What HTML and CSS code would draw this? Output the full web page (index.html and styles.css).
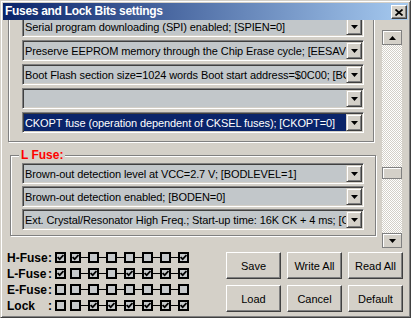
FILE: index.html
```html
<!DOCTYPE html>
<html lang="en">

<head>
    <meta charset="UTF-8">
    <title>Fuses and Lock Bits settings</title>
    <link rel="stylesheet" href="styles.css">
</head>

<body>
    <div class="window">

        <!-- Caption -->
        <div class="titlebar">
            <span class="title">Fuses and Lock Bits settings</span>
            <span class="close-btn">
                <svg width="8" height="7" viewBox="0 0 8 7"><path d="M0.5 0.5l7 6M7.5 0.5l-7 6" /></svg>
            </span>
        </div>

        <!-- Fuse combos -->
        <div class="scroll-row">
            <div class="scroll-view">
                <div class="group group-h">
                    <div class="combo"><span class="combo-text">Serial program downloading (SPI) enabled; [SPIEN=0]</span><span class="combo-btn"><svg width="7" height="4"><path d="M0 0h7l-3.5 4z" /></svg></span></div>
                    <div class="combo"><span class="combo-text">Preserve EEPROM memory through the Chip Erase cycle; [EESAVE=0]</span><span class="combo-btn"><svg width="7" height="4"><path d="M0 0h7l-3.5 4z" /></svg></span></div>
                    <div class="combo"><span class="combo-text">Boot Flash section size=1024 words Boot start address=$0C00; [BOOTSZ=01]</span><span class="combo-btn"><svg width="7" height="4"><path d="M0 0h7l-3.5 4z" /></svg></span></div>
                    <div class="combo"><span class="combo-text"></span><span class="combo-btn"><svg width="7" height="4"><path d="M0 0h7l-3.5 4z" /></svg></span></div>
                    <div class="combo selected"><span class="combo-text">CKOPT fuse (operation dependent of CKSEL fuses); [CKOPT=0]</span><span class="combo-btn"><svg width="7" height="4"><path d="M0 0h7l-3.5 4z" /></svg></span></div>
                </div>

                <div class="group group-l">
                    <span class="group-label">L Fuse:</span>
                    <div class="combo"><span class="combo-text">Brown-out detection level at VCC=2.7 V; [BODLEVEL=1]</span><span class="combo-btn"><svg width="7" height="4"><path d="M0 0h7l-3.5 4z" /></svg></span></div>
                    <div class="combo"><span class="combo-text">Brown-out detection enabled; [BODEN=0]</span><span class="combo-btn"><svg width="7" height="4"><path d="M0 0h7l-3.5 4z" /></svg></span></div>
                    <div class="combo"><span class="combo-text">Ext. Crystal/Resonator High Freq.; Start-up time: 16K CK + 4 ms; [CKSEL=1111 SUT=11]</span><span class="combo-btn"><svg width="7" height="4"><path d="M0 0h7l-3.5 4z" /></svg></span></div>
                </div>
            </div>

            <div class="scrollbar">
                <div class="sb-btn"><svg width="7" height="4"><path d="M0 4h7l-3.5-4z" /></svg></div>
                <div class="sb-track"><div class="sb-thumb"></div></div>
                <div class="sb-btn"><svg width="7" height="4"><path d="M0 0h7l-3.5 4z" /></svg></div>
            </div>
        </div>

        <!-- Bits + buttons -->
        <div class="bottom">
            <div class="fuse-grid">
                <div class="fuse-row">
                    <span class="fuse-name"><span>H-Fuse</span><span>:</span></span>
                    <span class="bit first"><svg viewBox="0 0 7 7"><path d="M0.6 3l2.1 2.2 3.8-4.2" /></svg></span>
                    <span class="bits">
                        <span class="bit"><svg viewBox="0 0 7 7"><path d="M0.6 3l2.1 2.2 3.8-4.2" /></svg></span>
                        <span class="bit"></span>
                        <span class="bit"></span>
                        <span class="bit"></span>
                        <span class="bit"></span>
                        <span class="bit"></span>
                        <span class="bit"><svg viewBox="0 0 7 7"><path d="M0.6 3l2.1 2.2 3.8-4.2" /></svg></span>
                    </span>
                </div>
                <div class="fuse-row">
                    <span class="fuse-name"><span>L-Fuse</span><span>:</span></span>
                    <span class="bit first"><svg viewBox="0 0 7 7"><path d="M0.6 3l2.1 2.2 3.8-4.2" /></svg></span>
                    <span class="bits">
                        <span class="bit"></span>
                        <span class="bit"><svg viewBox="0 0 7 7"><path d="M0.6 3l2.1 2.2 3.8-4.2" /></svg></span>
                        <span class="bit"></span>
                        <span class="bit"><svg viewBox="0 0 7 7"><path d="M0.6 3l2.1 2.2 3.8-4.2" /></svg></span>
                        <span class="bit"><svg viewBox="0 0 7 7"><path d="M0.6 3l2.1 2.2 3.8-4.2" /></svg></span>
                        <span class="bit"><svg viewBox="0 0 7 7"><path d="M0.6 3l2.1 2.2 3.8-4.2" /></svg></span>
                        <span class="bit"><svg viewBox="0 0 7 7"><path d="M0.6 3l2.1 2.2 3.8-4.2" /></svg></span>
                    </span>
                </div>
                <div class="fuse-row">
                    <span class="fuse-name"><span>E-Fuse</span><span>:</span></span>
                    <span class="bit first"></span>
                    <span class="bits">
                        <span class="bit"></span>
                        <span class="bit"></span>
                        <span class="bit"></span>
                        <span class="bit"></span>
                        <span class="bit"></span>
                        <span class="bit"></span>
                        <span class="bit"></span>
                    </span>
                </div>
                <div class="fuse-row">
                    <span class="fuse-name"><span>Lock</span><span>:</span></span>
                    <span class="bit first"></span>
                    <span class="bits">
                        <span class="bit"></span>
                        <span class="bit"><svg viewBox="0 0 7 7"><path d="M0.6 3l2.1 2.2 3.8-4.2" /></svg></span>
                        <span class="bit"><svg viewBox="0 0 7 7"><path d="M0.6 3l2.1 2.2 3.8-4.2" /></svg></span>
                        <span class="bit"><svg viewBox="0 0 7 7"><path d="M0.6 3l2.1 2.2 3.8-4.2" /></svg></span>
                        <span class="bit"><svg viewBox="0 0 7 7"><path d="M0.6 3l2.1 2.2 3.8-4.2" /></svg></span>
                        <span class="bit"><svg viewBox="0 0 7 7"><path d="M0.6 3l2.1 2.2 3.8-4.2" /></svg></span>
                        <span class="bit"><svg viewBox="0 0 7 7"><path d="M0.6 3l2.1 2.2 3.8-4.2" /></svg></span>
                    </span>
                </div>
            </div>

            <div class="buttons">
                <button class="btn">Save</button>
                <button class="btn">Write All</button>
                <button class="btn">Read All</button>
                <button class="btn">Load</button>
                <button class="btn">Cancel</button>
                <button class="btn">Default</button>
            </div>
        </div>

    </div>
</body>

</html>
```

FILE: styles.css
```css
body {
    margin: 0;
    font-family: "Liberation Sans", Arial, sans-serif;
    font-size: 11px;
    color: #000;
}

.window {
    width: 411px;
    height: 318px;
    box-sizing: border-box;
    background: #d4d0c8;
    border: 1px solid;
    border-color: #d4d0c8 #404040 #404040 #d4d0c8;
    box-shadow: inset 1px 1px #fff, inset -1px -1px #808080;
    padding: 2px;
    display: flex;
    flex-direction: column;
    overflow: hidden;
}

/* caption */
.titlebar {
    height: 17px;
    flex-shrink: 0;
    display: flex;
    justify-content: space-between;
    background: linear-gradient(to right, #0a246a, #a6caf0);
    padding-left: 2px;
}

.title {
    color: #fff;
    font-weight: bold;
    font-size: 12px;
    letter-spacing: -0.3px;
    line-height: 17px;
}

.close-btn {
    width: 16px;
    height: 14px;
    box-sizing: border-box;
    margin: 2px 1px 0 0;
    background: #d4d0c8;
    border: 1px solid;
    border-color: #fff #404040 #404040 #fff;
    box-shadow: inset -1px -1px #808080;
    display: flex;
    align-items: center;
    justify-content: center;
}

.close-btn svg path {
    stroke: #000;
    stroke-width: 1.7;
}

/* scrolling panel */
.scroll-row {
    height: 228px;
    flex-shrink: 0;
    display: flex;
}

.scroll-view {
    width: 379px;
    overflow: hidden;
}

.group {
    position: relative;
    width: 366px;
    box-sizing: border-box;
    border: 1px solid #808080;
    box-shadow: inset 1px 1px #fff, 1px 1px #fff;
    display: flex;
    flex-direction: column;
}

.group-h {
    margin: -14px 0 0 5px;
    padding: 9px 9px 8px 13px;
    gap: 3px;
}

.group-l {
    margin: 13px 0 0 7px;
    padding: 7px 11px 5px 11px;
    gap: 2px;
}

.group-label {
    position: absolute;
    top: -7px;
    left: 8px;
    padding: 0 2px;
    background: #d4d0c8;
    color: #ff0000;
    font-weight: bold;
    font-size: 12px;
    line-height: 13px;
}

.combo {
    height: 21px;
    box-sizing: border-box;
    display: flex;
    background: #c2c7ca;
    border: 1px solid;
    border-color: #808080 #fff #fff #808080;
    box-shadow: inset 1px 1px #404040, inset -1px -1px #d4d0c8;
    padding: 1px;
}

.combo-text {
    flex: 1;
    height: 17px;
    line-height: 19px;
    padding-left: 1px;
    overflow: hidden;
    white-space: nowrap;
    letter-spacing: -0.1px;
}

.combo.selected .combo-text {
    background: #0a246a;
    color: #fff;
}

.combo-btn {
    width: 16px;
    height: 17px;
    box-sizing: border-box;
    background: #d4d0c8;
    border: 1px solid;
    border-color: #d4d0c8 #404040 #404040 #d4d0c8;
    box-shadow: inset 1px 1px #fff, inset -1px -1px #808080;
    display: flex;
    align-items: center;
    justify-content: center;
}

/* scrollbar */
.scrollbar {
    width: 20px;
    height: 218px;
    margin: 10px 0 0 0;
    display: flex;
    flex-direction: column;
}

.sb-btn {
    height: 15px;
    box-sizing: border-box;
    background: #d4d0c8;
    border: 1px solid #808080;
    box-shadow: inset 1px 1px #fff;
    display: flex;
    align-items: center;
    justify-content: center;
}

.sb-track {
    flex: 1;
    background: repeating-conic-gradient(#d4d0c8 0 25%, #fff 0 50%) 0 0 / 2px 2px;
}

.sb-thumb {
    height: 12px;
    margin-top: 122px;
    box-sizing: border-box;
    background: #d4d0c8;
    border: 1px solid #808080;
    box-shadow: inset 1px 1px #fff;
}

/* fuse bits */
.bottom {
    flex: 1;
    display: flex;
    justify-content: space-between;
}

.fuse-grid {
    padding: 2px 0 0 4px;
}

.fuse-row {
    height: 16px;
    display: flex;
}

.fuse-name {
    flex-shrink: 0;
    width: 45px;
    margin-right: 3px;
    display: flex;
    justify-content: space-between;
    white-space: nowrap;
    font-weight: bold;
    font-size: 12px;
    line-height: 16px;
}

.bits {
    display: flex;
    gap: 7px;
    height: 11px;
    margin-top: 2px;
    background: linear-gradient(#000, #000) center / 100% 1px no-repeat;
}

.bit {
    flex-shrink: 0;
    width: 11px;
    height: 11px;
    box-sizing: border-box;
    border: 2px solid #000;
    background: #c6c9cb;
    display: flex;
}

.bit.first {
    margin: 2px 4px 0 0;
}

.bit svg {
    width: 7px;
    height: 7px;
}

.bit svg path {
    fill: none;
    stroke: #000;
    stroke-width: 1.8;
}

/* buttons */
.buttons {
    display: grid;
    grid-template-columns: repeat(3, 55px);
    grid-template-rows: repeat(2, 27px);
    gap: 6px;
    padding: 4px 5px 0 0;
}

.btn {
    font-family: "Liberation Sans", Arial, sans-serif;
    font-size: 11px;
    color: #000;
    background: #d4d0c8;
    border: 1px solid;
    border-color: #fff #404040 #404040 #fff;
    box-shadow: inset -1px -1px #808080;
    padding: 0;
}
```
